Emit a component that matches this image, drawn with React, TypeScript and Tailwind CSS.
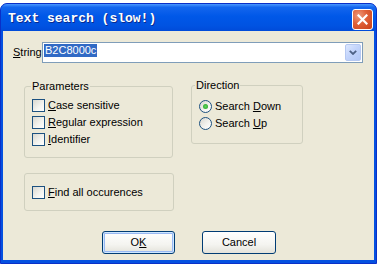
import React from "react";

function Key({ children }: { children: string }) {
  return <span className="underline decoration-1 underline-offset-[1px]">{children}</span>;
}

function CheckBox() {
  return (
    <span className="block w-[13px] h-[13px] border border-[#1c5180] bg-[linear-gradient(135deg,#d9d8d0_0%,#f4f4f0_60%,#ffffff_100%)]" />
  );
}

function Radio({ checked }: { checked?: boolean }) {
  return (
    <span className="flex items-center justify-center w-[13px] h-[13px] rounded-full border border-[#1c5180] bg-[linear-gradient(135deg,#d9d8d0_0%,#f4f4f0_60%,#ffffff_100%)]">
      {checked && (
        <span className="block w-[5px] h-[5px] rounded-full bg-[radial-gradient(circle,#5fd35f_0%,#21a121_100%)]" />
      )}
    </span>
  );
}

function Row({ children }: { children: React.ReactNode }) {
  return <div className="flex items-center gap-[3px] h-[17px]">{children}</div>;
}

export default function App() {
  return (
    <div className="min-h-screen bg-white pt-[3px] font-['Liberation_Sans',Arial,sans-serif] text-[11px] leading-[13px] text-black">
      <div className="w-[377px] h-[261px] rounded-t-[7px] border border-[#0a2fc8] bg-[#0450e0] flex flex-col">
        {/* title bar */}
        <div className="h-[27px] shrink-0 flex items-start pl-[7px] pr-[3px] rounded-t-[6px] bg-[linear-gradient(180deg,#4a97ff_0%,#1466ee_12%,#0058e8_45%,#0053e2_80%,#004bd9_100%)]">
          <span className="mt-[7px] font-['Liberation_Mono',monospace] font-bold text-[13px] leading-[15px] text-white [text-shadow:1px_1px_0_#0b2a8c]">
            Text search (slow!)
          </span>
          <button className="ml-auto mt-[5px] w-[21px] h-[21px] rounded-[3px] border border-white flex items-center justify-center bg-[radial-gradient(circle_at_30%_30%,#ee9a7c_0%,#df5f37_45%,#c8401a_100%)]">
            <svg width="11" height="11" viewBox="0 0 11 11">
              <path d="M1.5 1.5 L9.5 9.5 M9.5 1.5 L1.5 9.5" stroke="white" strokeWidth="2.2" strokeLinecap="square" />
            </svg>
          </button>
        </div>

        {/* body */}
        <div className="mx-[2px] h-[229px] bg-[#ece9d8] flex flex-col">
          <div className="flex items-center pl-[10px] pt-[11px]">
            <span className="w-[29px]">
              <Key>S</Key>tring
            </span>
            <div className="w-[321px] h-[21px] border border-[#7f9db9] bg-white flex items-start p-[1px]">
              <span className="bg-[#316ac5] text-white px-[1px] leading-[13px] h-[13px]">B2C8000c</span>
              <span className="ml-auto w-[16px] h-[17px] rounded-[2px] border border-[#b5c8f2] bg-[linear-gradient(135deg,#dde8ff_0%,#c1d3fb_50%,#b2c7f5_100%)] flex items-center justify-center">
                <svg width="8" height="5" viewBox="0 0 8 5">
                  <path d="M0.8 0.8 L4 4 L7.2 0.8" fill="none" stroke="#4d6185" strokeWidth="1.8" />
                </svg>
              </span>
            </div>
          </div>

          <div className="flex items-start pl-[21px]">
            <fieldset className="mt-[17px] w-[149px] h-[78px] rounded-[3px] border border-[#d0d0bf] pl-[7px] pt-[4px]">
              <legend className="-ml-px px-[1px] leading-[13px]">Parameters</legend>
              <Row>
                <CheckBox />
                <span>
                  <Key>C</Key>ase sensitive
                </span>
              </Row>
              <Row>
                <CheckBox />
                <span>
                  <Key>R</Key>egular expression
                </span>
              </Row>
              <Row>
                <CheckBox />
                <span>
                  <Key>I</Key>dentifier
                </span>
              </Row>
            </fieldset>

            <fieldset className="ml-[18px] mt-[16px] w-[112px] h-[65px] rounded-[3px] border border-[#d0d0bf] pl-[7px] pt-[6px]">
              <legend className="-ml-[4px] px-[1px] leading-[13px]">Direction</legend>
              <Row>
                <Radio checked />
                <span>
                  Search <Key>D</Key>own
                </span>
              </Row>
              <Row>
                <Radio />
                <span>
                  Search <Key>U</Key>p
                </span>
              </Row>
            </fieldset>
          </div>

          <div className="ml-[21px] mt-[15px] w-[150px] h-[38px] rounded-[3px] border border-[#d0d0bf] pl-[7px] flex items-center">
            <Row>
              <CheckBox />
              <span>
                <Key>F</Key>ind all occurences
              </span>
            </Row>
          </div>

          <div className="flex gap-[27px] pl-[99px] mt-[20px]">
            <button className="w-[73px] h-[23px] rounded-[3px] border border-[#003c74] bg-[linear-gradient(180deg,#ffffff_0%,#f4f4f0_60%,#e3e2da_100%)] shadow-[inset_0_0_0_1px_#cee7ff,inset_0_0_0_2px_#98b8f3] text-[11px]">
              O<Key>K</Key>
            </button>
            <button className="w-[74px] h-[23px] rounded-[3px] border border-[#003c74] bg-[linear-gradient(180deg,#ffffff_0%,#f4f4f0_60%,#e3e2da_100%)] text-[11px]">
              Cancel
            </button>
          </div>
        </div>
      </div>
    </div>
  );
}
